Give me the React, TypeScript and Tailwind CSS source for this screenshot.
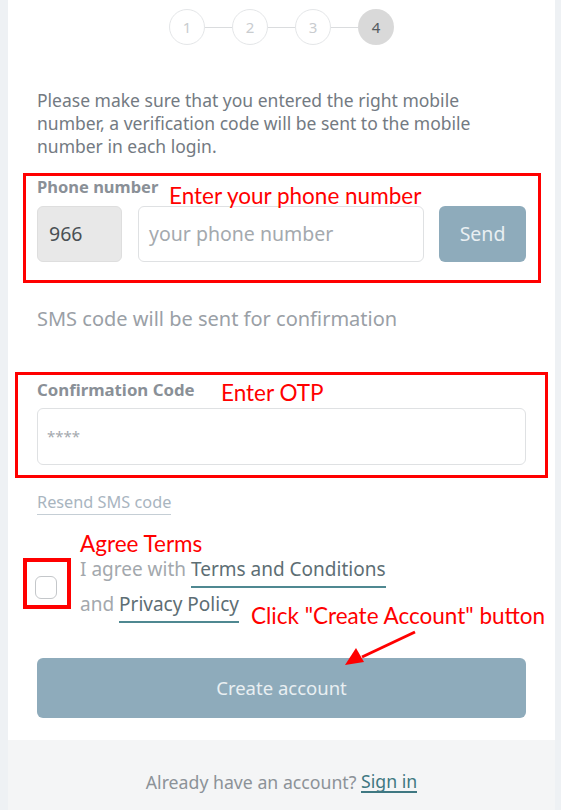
import React from "react";

const Step = ({ n, active }: { n: number; active?: boolean }) => (
  <div
    className={`w-9 h-9 rounded-full flex items-center justify-center text-[15px] ${
      active ? "bg-[#d9d9d9] text-[#555b60]" : "border border-[#e4e6e8] text-[#c9cccf]"
    }`}
  >
    {n}
  </div>
);

const Line = () => <div className="w-[27px] h-px bg-[#dadcde]" />;

export default function App() {
  return (
    <div
      className="relative w-full h-[810px] bg-[#eef1f4] pl-[8px] pr-[6px] overflow-hidden"
      style={{ fontFamily: '"Noto Sans", "Open Sans", sans-serif' }}
    >
      <div className="h-full bg-white flex flex-col">
        <div className="flex items-center justify-center pt-[9px]">
          <Step n={1} />
          <Line />
          <Step n={2} />
          <Line />
          <Step n={3} />
          <Line />
          <Step n={4} active />
        </div>

        <div className="px-[29px] flex-1">
          <p className="mt-[44px] max-w-[440px] text-[17.5px] leading-[23px] text-[#737a82]">
            Please make sure that you entered the right mobile number, a verification code will be sent to the mobile
            number in each login.
          </p>

          <div className="mt-[19px] text-[16.5px] leading-[20px] font-bold text-[#8a9097]">Phone number</div>
          <div className="mt-[9px] flex h-[56px]">
            <div className="w-[85px] bg-[#e8e8e8] border border-[#dedede] rounded-md flex items-center pl-[11px] text-[19.5px] text-[#4a4f54]">
              966
            </div>
            <div className="ml-[16px] w-[286px] border border-[#dfe1e3] rounded-md flex items-center pl-[10px] text-[19.5px] text-[#a4a9ae]">
              your phone number
            </div>
            <div className="ml-[15px] flex-1 bg-[#8eabbb] rounded-md flex items-center justify-center text-[19.5px] text-[#e9eff2]">
              Send
            </div>
          </div>

          <div className="mt-[45px] text-[20px] leading-[24px] text-[#9aa0a6]">
            SMS code will be sent for confirmation
          </div>

          <div className="mt-[49px] text-[16.8px] leading-[20px] font-bold text-[#8a9097]">Confirmation Code</div>
          <div className="mt-[8px] h-[57px] border border-[#dfe1e3] rounded-md flex items-center pl-[9px] text-[15px] text-[#a4a9ae]">
            ****
          </div>

          <div className="mt-[27px] text-[16.3px] leading-[20px] text-[#a9b5bf]">
            <span className="border-b border-[#c5ced5] pb-[1px]">Resend SMS code</span>
          </div>

          <div className="mt-[40px] flex items-center">
            <div className="ml-[-2px] w-[22px] h-[23px] border-[1.5px] border-[#c4c7ca] rounded-[6px]" />
            <div className="ml-[23px] text-[19px] leading-[35px] text-[#a3a8ad]">
              <div>
                I agree with{" "}
                <span className="text-[#5d6e74] border-b-2 border-[#4f8891] pb-[4px]">Terms and Conditions</span>
              </div>
              <div>
                and{" "}
                <span className="text-[#5d6e74] border-b-2 border-[#4f8891] pb-[4px]">Privacy Policy</span>
              </div>
            </div>
          </div>

          <div className="mt-[36px] h-[60px] bg-[#8eabbb] rounded-md flex items-center justify-center text-[18.5px] text-[#e9eff2]">
            Create account
          </div>
        </div>

        <div className="h-[70px] bg-[#f4f5f6] flex items-center justify-center pt-[14px] text-[17.7px] text-[#8c9298]">
          Already have an account?&nbsp;
          <span className="text-[#3f7882] border-b-2 border-[#3f7882] leading-[19px]">Sign in</span>
        </div>
      </div>

      {/* annotations */}
      <div className="absolute left-[23px] top-[173px] w-[518px] h-[110px] border-[3px] border-[#ff0000]" />
      <div className="absolute left-[15px] top-[372px] w-[533px] h-[106px] border-[3px] border-[#ff0000]" />
      <div className="absolute left-[23px] top-[558px] w-[48px] h-[51px] border-[4px] border-[#ff0000]" />
      <div
        className="absolute left-[169px] top-[182px] text-[22.5px] leading-[28px] text-[#ff0000]"
        style={{ fontFamily: 'Lato, "Open Sans", sans-serif' }}
      >
        Enter your phone number
      </div>
      <div
        className="absolute left-[221px] top-[379px] text-[22.5px] leading-[28px] text-[#ff0000]"
        style={{ fontFamily: 'Lato, "Open Sans", sans-serif' }}
      >
        Enter OTP
      </div>
      <div
        className="absolute left-[80px] top-[530px] text-[22.5px] leading-[28px] text-[#ff0000]"
        style={{ fontFamily: 'Lato, "Open Sans", sans-serif' }}
      >
        Agree Terms
      </div>
      <div
        className="absolute left-[251px] top-[602px] text-[22.5px] leading-[28px] text-[#ff0000]"
        style={{ fontFamily: 'Lato, "Open Sans", sans-serif' }}
      >
        Click "Create Account" button
      </div>
      <svg className="absolute left-0 top-0" width="561" height="810" viewBox="0 0 561 810">
        <line x1="415" y1="632" x2="362" y2="657" stroke="#ff0000" strokeWidth="3" />
        <polygon points="345,665 356,648 364,662" fill="#ff0000" />
      </svg>
    </div>
  );
}
